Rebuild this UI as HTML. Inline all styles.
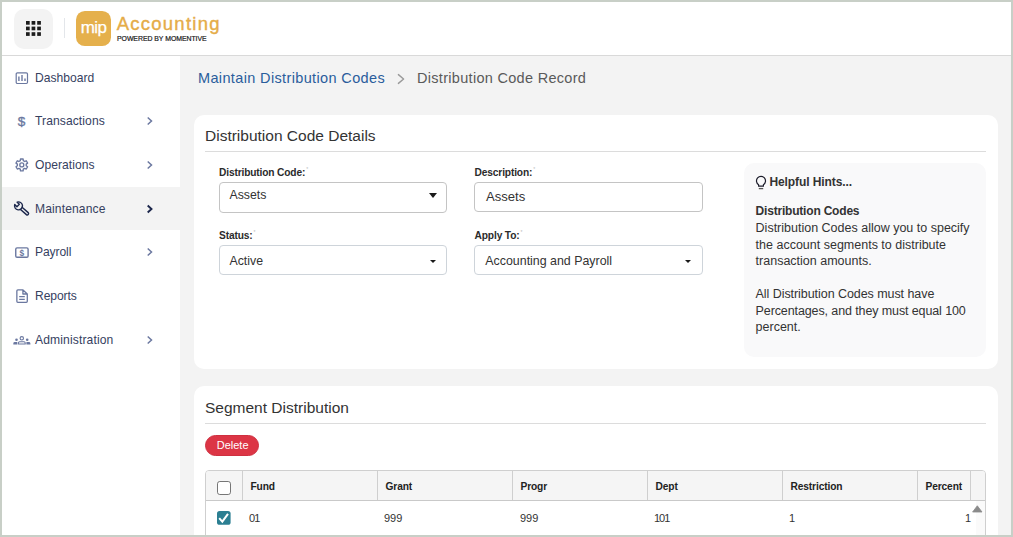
<!DOCTYPE html>
<html lang="en">
<head>
<meta charset="utf-8">
<title>Distribution Code Record</title>
<style>
*{box-sizing:border-box;margin:0;padding:0}
html,body{width:1013px;height:537px;overflow:hidden;background:#f3f3f3}
body{font-family:"Liberation Sans",Arial,sans-serif;color:#333;position:relative;font-size:13px}
.abs{position:absolute}
#frame{position:absolute;left:0;top:0;width:1013px;height:537px;border:2px solid #c8cfc7;z-index:100;pointer-events:none}
#header{position:absolute;left:0;top:0;width:1013px;height:56px;background:#fff;border-bottom:1px solid #d9d9d9}
#gridbtn{position:absolute;left:14px;top:9px;width:39px;height:40px;border-radius:10px;background:#f3f3f3}
#divider{position:absolute;left:63.7px;top:18px;width:1.5px;height:20px;background:#e3e6ea}
#logo{position:absolute;left:76.3px;top:11px;width:34.4px;height:34.8px;border-radius:8.8px;background:#e5b04c;color:#fff;font-size:17px;letter-spacing:-0.6px;text-align:center;line-height:33px;-webkit-text-stroke:0.25px #fff}
#acct{position:absolute;left:116.7px;top:12.7px;font-size:18.5px;line-height:22px;color:#e5ac48;letter-spacing:1.25px;-webkit-text-stroke:0.38px #e5ac48;white-space:nowrap}
#powered{position:absolute;left:117px;top:34px;font-size:6.9px;line-height:9px;color:#1a1a1a;letter-spacing:-0.03px;-webkit-text-stroke:0.2px #1a1a1a;white-space:nowrap}
#sidebar{position:absolute;left:0;top:56px;width:180px;height:481px;background:#fff}
.nav{position:absolute;left:0;width:180px;height:43.6px;font-size:12.1px;color:#36415f;line-height:43.6px}
.nav span{position:absolute;left:35px;top:1px;white-space:nowrap}
.nav svg.ic{position:absolute;left:12px;top:11.8px;width:20px;height:20px;overflow:visible}
.nav svg.ch{position:absolute;left:145px;top:15.8px;width:10px;height:12px;overflow:visible}
.nav .dol{position:absolute;left:17.8px;top:0;font-size:13.6px;color:#6b78a0;-webkit-text-stroke:0.35px #6b78a0}
.nav.active{background:#f3f3f3}
.crumb{position:absolute;top:68.7px;font-size:14.5px;letter-spacing:0.36px;line-height:18px;white-space:nowrap}
.card{position:absolute;left:194px;width:804px;background:#fff;border-radius:10px}
.card h2{position:absolute;left:11px;top:12px;font-size:15.5px;font-weight:normal;color:#333;line-height:18px;white-space:nowrap}
.card .hr{position:absolute;left:11px;width:781px;height:1px;background:#dcdcdc}
.lbl{position:absolute;font-size:10.2px;letter-spacing:-0.15px;font-weight:bold;color:#2b2b2b;line-height:12px;white-space:nowrap}
.lbl i{font-style:normal;font-weight:normal;color:#bbb;font-size:5px;position:relative;top:-5px;left:1px}
.box{position:absolute;width:229px;height:30px;border:1px solid #ced4da;border-radius:4px;background:#fff;font-size:12.3px;color:#333;white-space:nowrap}
.box .t{position:absolute;left:9.5px;line-height:14px}
.box .arr{position:absolute;right:9.5px;top:9.7px;width:0;height:0;border-left:4px solid transparent;border-right:4px solid transparent;border-top:5px solid #1a1a1a}
.box .arr.sm{right:10.5px;top:13.5px;border-left-width:3.5px;border-right-width:3.5px;border-top-width:3.5px}
#hints{position:absolute;left:550px;top:48px;width:242px;height:194px;background:#f9f9fa;border-radius:10px;font-size:12.5px;color:#333;line-height:16.6px}
#hints div{position:absolute;left:11.6px;white-space:nowrap}
#del{position:absolute;left:11.2px;top:49.4px;width:54.3px;height:20.8px;border-radius:11px;background:#dc3545;border:1px solid #cf3040;color:#fff;font-size:11px;text-align:center;line-height:19.6px;text-indent:0.6px}
#tbl{position:absolute;left:11px;top:84px;width:781px;height:80px;border:1px solid #cfcfcf;border-radius:4px 4px 0 0;background:#fff;overflow:hidden}
#thead{position:absolute;left:0;top:0;width:779px;height:30px;background:#f5f5f5;border-bottom:1px solid #c9c9c9}
.th{position:absolute;top:0;height:29px;border-left:1px solid #cfcfcf;font-size:10.2px;letter-spacing:-0.12px;font-weight:bold;color:#222;line-height:32.6px;padding-left:7.5px;white-space:nowrap}
.td{position:absolute;top:31px;height:34px;font-size:11px;color:#333;line-height:33px;white-space:nowrap}
.cb{position:absolute;width:13.6px;height:13.8px;border:1px solid #767676;border-radius:2.8px;background:#fff}
</style>
</head>
<body>
<div id="header">
  <div id="gridbtn">
    <svg class="abs" style="left:12px;top:12px" width="15" height="15" viewBox="0 0 15 15"><g fill="#1d1d1d"><rect x="0" y="0" width="3.7" height="3.7"/><rect x="5.6" y="0" width="3.7" height="3.7"/><rect x="11.2" y="0" width="3.7" height="3.7"/><rect x="0" y="5.6" width="3.7" height="3.7"/><rect x="5.6" y="5.6" width="3.7" height="3.7"/><rect x="11.2" y="5.6" width="3.7" height="3.7"/><rect x="0" y="11.2" width="3.7" height="3.7"/><rect x="5.6" y="11.2" width="3.7" height="3.7"/><rect x="11.2" y="11.2" width="3.7" height="3.7"/></g></svg>
  </div>
  <div id="divider"></div>
  <div id="logo">mip</div>
  <div id="acct">Accounting</div>
  <div id="powered">POWERED BY MOMENTIVE</div>
</div>

<div id="sidebar">
  <div class="nav" style="top:0px"><svg class="ic" viewBox="0 0 20 20"><rect x="4.2" y="4.8" width="11.3" height="10.7" rx="1.2" fill="none" stroke="#6b78a0" stroke-width="1.2"/><path d="M6.9 8.5V12.9 M10 6.9V12.9 M13 10.6V12.9" stroke="#6b78a0" stroke-width="1.4" fill="none"/></svg><span>Dashboard</span></div>
  <div class="nav" style="top:43.6px"><b class="dol" style="font-weight:normal">$</b><svg class="ch" style="top:15.4px" viewBox="0 0 10 12"><path d="M2.7 2.5 L6.5 6 L2.7 9.5" fill="none" stroke="#6b78a0" stroke-width="1.5" stroke-linecap="butt" stroke-linejoin="miter"/></svg><span style="top:0;letter-spacing:0.09px">Transactions</span></div>
  <div class="nav" style="top:87.2px"><svg class="ic" viewBox="0 0 20 20"><g transform="translate(9.8 9.9)" fill="none" stroke="#6b78a0" stroke-width="1.35" stroke-linejoin="round"><path d="M-1.50 -4.24 L-1.33 -5.95 L1.33 -5.95 L1.50 -4.24 L2.92 -3.42 L4.49 -4.13 L5.82 -1.82 L4.42 -0.82 L4.42 0.82 L5.82 1.82 L4.49 4.13 L2.92 3.42 L1.50 4.24 L1.33 5.95 L-1.33 5.95 L-1.50 4.24 L-2.92 3.42 L-4.49 4.13 L-5.82 1.82 L-4.42 0.82 L-4.42 -0.82 L-5.82 -1.82 L-4.49 -4.13 L-2.92 -3.42Z"/><circle r="2"/></g></svg><svg class="ch" style="top:16.1px" viewBox="0 0 10 12"><path d="M2.7 2.5 L6.5 6 L2.7 9.5" fill="none" stroke="#6b78a0" stroke-width="1.5" stroke-linecap="butt" stroke-linejoin="miter"/></svg><span style="letter-spacing:0.05px">Operations</span></div>
  <div class="nav active" style="top:130.8px"><svg class="ic" viewBox="0 0 20 20"><g fill="none" stroke="#1c274c" stroke-width="1.4" stroke-linecap="round" stroke-linejoin="round"><path d="M5.13 3.14 A4 4 0 1 1 2.74 5.53 L4.93 7.72 L7.32 5.33 Z"/><path d="M8.24 10.22 L14.4 15.6 A1.35 1.35 0 0 0 16.2 13.6 L10.02 8.2"/></g></svg><svg class="ch" style="top:16.5px" viewBox="0 0 10 12"><path d="M2.7 2.5 L6.5 6 L2.7 9.5" fill="none" stroke="#1c274c" stroke-width="1.9" stroke-linecap="butt" stroke-linejoin="miter"/></svg><span style="letter-spacing:0.12px">Maintenance</span></div>
  <div class="nav" style="top:174.4px"><svg class="ic" viewBox="0 0 20 20"><rect x="3.75" y="5.85" width="12.35" height="9.4" rx="1.3" fill="none" stroke="#6b78a0" stroke-width="1.4"/><text x="9.9" y="13.5" font-size="8.4" font-weight="bold" text-anchor="middle" fill="#6b78a0" font-family="Liberation Sans, sans-serif">$</text></svg><svg class="ch" style="top:15.9px" viewBox="0 0 10 12"><path d="M2.7 2.5 L6.5 6 L2.7 9.5" fill="none" stroke="#6b78a0" stroke-width="1.5" stroke-linecap="butt" stroke-linejoin="miter"/></svg><span style="letter-spacing:-0.1px">Payroll</span></div>
  <div class="nav" style="top:218px"><svg class="ic" viewBox="0 0 20 20"><path d="M5.85 3.9 H11 L15.3 7.9 V15.35 A1 1 0 0 1 14.3 16.35 H5.85 A1 1 0 0 1 4.85 15.35 V4.9 A1 1 0 0 1 5.85 3.9 Z M10.9 4.1 V8 H15.1" fill="none" stroke="#6b78a0" stroke-width="1.3" stroke-linejoin="round"/><path d="M7.2 10.6 H12.8 M7.2 13.4 H12.8" stroke="#6b78a0" stroke-width="1.2"/></svg><span style="letter-spacing:-0.1px">Reports</span></div>
  <div class="nav" style="top:261.6px"><svg class="ic" style="top:12.4px" viewBox="0 0 20 20"><g fill="none" stroke="#6b78a0" stroke-width="1.1"><circle cx="9.8" cy="8.3" r="1.7"/><path d="M6.4 14 V12.9 A1.2 1.2 0 0 1 7.6 11.8 H12 A1.2 1.2 0 0 1 13.2 12.9 V14 Z"/></g><g fill="#6b78a0"><circle cx="4.5" cy="9.7" r="1.3"/><circle cx="15.2" cy="9.7" r="1.3"/><path d="M1.3 14.6 V13.4 A1.5 1.5 0 0 1 2.8 12 H5.3 V14.6 Z M18.4 14.6 V13.4 A1.5 1.5 0 0 0 16.9 12 H14.4 V14.6 Z"/></g></svg><svg class="ch" style="top:16.7px" viewBox="0 0 10 12"><path d="M2.7 2.5 L6.5 6 L2.7 9.5" fill="none" stroke="#6b78a0" stroke-width="1.5" stroke-linecap="butt" stroke-linejoin="miter"/></svg><span style="letter-spacing:0.13px">Administration</span></div>
</div>

<div class="crumb" style="left:198px;color:#2a5d9c">Maintain Distribution Codes</div>
<svg class="abs" style="left:396px;top:72px" width="10" height="14" viewBox="0 0 10 14"><path d="M2.4 2.6 L7.6 7 L2.4 11.4" fill="none" stroke="#9a9a9a" stroke-width="1.4" stroke-linecap="round" stroke-linejoin="round"/></svg>
<div class="crumb" style="left:417px;color:#5a5a5a;letter-spacing:0.3px">Distribution Code Record</div>

<div class="card" style="top:115px;height:254px">
  <h2>Distribution Code Details</h2>
  <div class="hr" style="top:36px"></div>
  <div class="lbl" style="left:25px;top:51.5px">Distribution Code:<i>*</i></div>
  <div class="box" style="left:25px;top:67px;width:228px;height:31px;border-color:#c4c4c4"><span class="t" style="top:4.6px">Assets</span><div class="arr"></div></div>
  <div class="lbl" style="left:280.6px;top:51.5px">Description:<i>*</i></div>
  <div class="box" style="left:280px;top:67px;border-color:#c4c4c4"><span class="t" style="left:11px;top:7px;font-size:13.1px">Assets</span></div>
  <div class="lbl" style="left:25px;top:114.5px">Status:<i>*</i></div>
  <div class="box" style="left:25px;top:130px;width:228px"><span class="t" style="top:7.6px">Active</span><div class="arr sm"></div></div>
  <div class="lbl" style="left:280.6px;top:114.5px">Apply To:<i>*</i></div>
  <div class="box" style="left:280px;top:130px"><span class="t" style="top:7.6px;left:10.3px;font-size:12.4px">Accounting and Payroll</span><div class="arr sm" style="right:11.5px"></div></div>
  <div id="hints">
    <svg class="abs" style="left:10px;top:11px" width="14" height="18" viewBox="-7 -7 14 18"><path d="M-2.4 5.2 V3.7 A4.5 4.5 0 1 1 2.4 3.7 V5.2 Z" fill="none" stroke="#1c1c2a" stroke-width="1.2" stroke-linejoin="round"/><path d="M-2.2 7.6 H2.2" stroke="#555" stroke-width="1.3"/></svg>
    <div style="top:11px;left:25.4px;font-weight:bold;font-size:12px;letter-spacing:-0.08px">Helpful Hints...</div>
    <div style="top:40px;font-weight:bold;font-size:12px;letter-spacing:-0.2px">Distribution Codes</div>
    <div style="top:57px">Distribution Codes allow you to specify<br>the account segments to distribute<br>transaction amounts.</div>
    <div style="top:123px"><span style="letter-spacing:-0.06px">All Distribution Codes must have</span><br><span style="letter-spacing:-0.11px">Percentages, and they must equal 100</span><br>percent.</div>
  </div>
</div>

<div class="card" style="top:386px;height:170px">
  <h2 style="top:13.2px">Segment Distribution</h2>
  <div class="hr" style="top:37px"></div>
  <div id="del">Delete</div>
  <div id="tbl">
    <div id="thead">
      <div class="cb" style="left:11.1px;top:10.1px"></div>
      <div class="th" style="left:36px;width:135px">Fund</div>
      <div class="th" style="left:171px;width:135px">Grant</div>
      <div class="th" style="left:306px;width:135px">Progr</div>
      <div class="th" style="left:441px;width:135px">Dept</div>
      <div class="th" style="left:576px;width:135px">Restriction</div>
      <div class="th" style="left:711px;width:53px">Percent</div>
      <div class="th" style="left:764px;width:17px"></div>
    </div>
    <div class="abs" style="left:770px;top:30px;width:15px;height:40px;background:#fafafa"></div>
    <svg class="abs" style="left:765px;top:33px" width="14" height="10" viewBox="0 0 14 10"><path d="M6.3 1.8 L11 8 H1.6 Z" fill="#8a8a8a" stroke="#8a8a8a" stroke-width="0.8" stroke-linejoin="round"/></svg>
    <svg class="abs" style="left:11px;top:39.8px" width="14" height="14" viewBox="0 0 14 14"><rect x="0" y="0" width="13.6" height="13.8" rx="2.6" fill="#2b7f92"/><path d="M2.2 7.2 L5.3 10.6 L11 2.9" fill="none" stroke="#fff" stroke-width="2"/></svg>
    <div class="td" style="left:43px;letter-spacing:-0.8px">01</div>
    <div class="td" style="left:178px">999</div>
    <div class="td" style="left:314px">999</div>
    <div class="td" style="left:448px;letter-spacing:-1px">101</div>
    <div class="td" style="left:583px">1</div>
    <div class="td" style="left:759px">1</div>
  </div>
</div>

<div id="frame"></div>
</body>
</html>
